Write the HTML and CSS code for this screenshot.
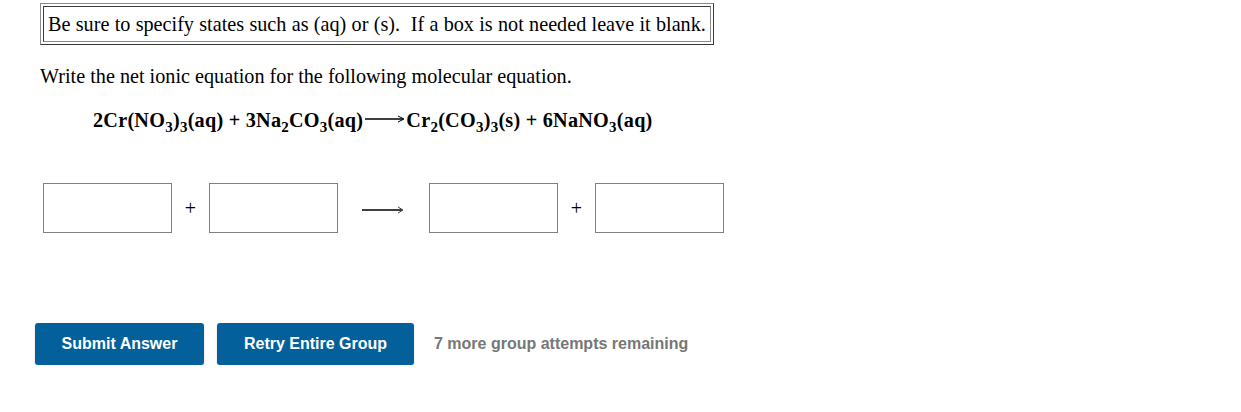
FILE: index.html
```html
<!DOCTYPE html>
<html>
<head>
<meta charset="utf-8">
<link rel="stylesheet" href="styles.css">
</head>
<body>
<div class="page">
  <div class="question">
    <div class="note-outer">
      <div class="note-inner">Be sure to specify states such as (aq) or (s).&nbsp; If a box is not needed leave it blank.</div>
    </div>
    <p class="prompt">Write the net ionic equation for the following molecular equation.</p>
    <p class="equation">2Cr(NO<sub>3</sub>)<sub>3</sub>(aq) + 3Na<sub>2</sub>CO<sub>3</sub>(aq)<svg class="eq-arrow" width="40" height="10" viewBox="0 0 40 10"><line x1="0" y1="5" x2="38" y2="5" stroke="#000" stroke-width="1.3"/><path d="M33 2 L39 5 L33 8" fill="none" stroke="#000" stroke-width="1"/></svg>Cr<sub>2</sub>(CO<sub>3</sub>)<sub>3</sub>(s) + 6NaNO<sub>3</sub>(aq)</p>
    <div class="answer-row">
      <div class="box"></div>
      <div class="op">+</div>
      <div class="box"></div>
      <div class="arrow"><svg width="42" height="10" viewBox="0 0 42 10"><line x1="0" y1="5" x2="40" y2="5" stroke="#000" stroke-width="1.3"/><path d="M36 2 L41 5 L36 8" fill="none" stroke="#444" stroke-width="1"/></svg></div>
      <div class="box"></div>
      <div class="op">+</div>
      <div class="box"></div>
    </div>
  </div>
  <div class="actions">
    <button class="btn btn-submit">Submit Answer</button>
    <button class="btn btn-retry">Retry Entire Group</button>
    <span class="remaining">7 more group attempts remaining</span>
  </div>
</div>
</body>
</html>
```
FILE: styles.css
```css
html, body {
  margin: 0;
  padding: 0;
  background: #fff;
}
.page {
  padding: 3px 0 0 35px;
  font-family: "Liberation Serif", "Times New Roman", serif;
  font-size: 20.2px;
  color: #000;
}
.question {
  padding-left: 5px;
}
.note-outer {
  display: inline-block;
  border: 1px solid;
  border-color: #8a8a8a #3a3a3a #3a3a3a #8a8a8a;
  padding: 2px;
}
.note-inner {
  border: 1px solid;
  border-color: #3a3a3a #8a8a8a #8a8a8a #3a3a3a;
  padding: 6px 4px 6px 4px;
  line-height: 22px;
  white-space: nowrap;
  word-spacing: 0.25px;
}
.prompt {
  margin: 20px 0 0 0;
  line-height: 23px;
}
.equation {
  margin: 21px 0 0 53px;
  font-weight: bold;
  line-height: 23px;
  letter-spacing: 0.25px;
}
.equation sub {
  font-size: 15px;
  vertical-align: -5px;
  line-height: 0;
}
.eq-arrow {
  vertical-align: 3px;
  margin: 0 1px 0 2px;
}
.answer-row {
  display: flex;
  align-items: center;
  margin: 51px 0 0 3px;
}
.box {
  width: 129px;
  height: 50px;
  box-sizing: border-box;
  border: 1px solid #808080;
}
.op {
  width: 37px;
  text-align: center;
  font-size: 20px;
  line-height: 22px;
}
.arrow {
  width: 91px;
  display: flex;
  justify-content: flex-start;
  padding-left: 24px;
  box-sizing: border-box;
  padding-top: 4px;
}
.arrow svg {
  display: block;
}
.actions {
  display: flex;
  align-items: center;
  gap: 13px;
  font-family: "Liberation Sans", Arial, sans-serif;
}
.btn {
  height: 42px;
  border: none;
  border-radius: 3px;
  background: #04609b;
  color: #fff;
  font-family: "Liberation Sans", Arial, sans-serif;
  font-size: 16px;
  font-weight: bold;
  padding: 0 26px;
  box-shadow: 0 1px 2px rgba(0,0,0,0.2);
}
.btn-submit {
  width: 169px;
}
.btn-retry {
  width: 197px;
}
.remaining {
  margin-left: 7px;
  color: #777;
  font-weight: bold;
  font-size: 16px;
}
.question + .actions {
  margin-top: 90px;
}
```
